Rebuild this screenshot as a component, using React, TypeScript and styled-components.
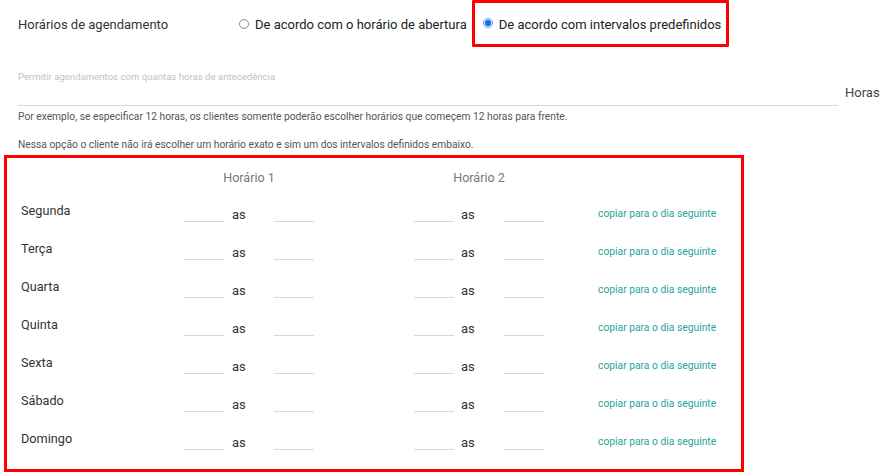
import React from "react";
import styled, { createGlobalStyle } from "styled-components";

const GlobalStyle = createGlobalStyle`
  html, body { margin: 0; padding: 0; background: #fff; }
  body { font-family: Roboto, "Noto Sans", "Liberation Sans", sans-serif; color: #333; }
  * { box-sizing: border-box; }
`;

const Page = styled.div`
  width: 896px;
  height: 476px;
  overflow: hidden;
  display: flex;
  flex-direction: column;
`;

const TopRow = styled.div`
  display: flex;
  align-items: flex-start;
  height: 47px;
  padding-left: 18px;
`;

const RowLabel = styled.div`
  width: 221px;
  font-size: 13px;
  line-height: 16px;
  color: #333;
  padding-top: 17px;
`;

const Option = styled.label<{ $boxed?: boolean }>`
  display: flex;
  align-items: center;
  gap: 6px;
  font-size: 13px;
  line-height: 16px;
  color: #222;
  height: 47px;
  padding-top: 3px;
  ${(p) =>
    p.$boxed
      ? `border: 3px solid #ff0000; border-radius: 1px; padding: 2px 5px 0 8px; margin-left: 5px;`
      : ``}
`;

const Radio = styled.span<{ $checked?: boolean }>`
  width: 10px;
  height: 10px;
  border-radius: 50%;
  flex: none;
  margin-top: -3px;
  border: 1px solid ${(p) => (p.$checked ? "#5b9cf0" : "#8a8a8a")};
  background: ${(p) => (p.$checked ? "radial-gradient(circle, #1a73e8 0 3px, #fff 3.6px)" : "#fff")};
`;

const FieldRow = styled.div`
  display: flex;
  align-items: flex-end;
  padding-left: 18px;
  margin-top: 24px;
  gap: 7px;
`;

const FieldWrap = styled.div`
  width: 820px;
  display: flex;
  flex-direction: column;
`;

const FloatLabel = styled.div`
  font-size: 9.6px;
  line-height: 12px;
  color: #c2c2c2;
`;

const FieldLine = styled.div`
  height: 23px;
  border-bottom: 1px solid #d6d6d6;
`;

const Suffix = styled.div`
  font-size: 13px;
  line-height: 16px;
  color: #444;
  margin-bottom: 5px;
`;

const Hint = styled.div<{ $top: number }>`
  padding-left: 18px;
  font-size: 10.25px;
  line-height: 15px;
  color: #555;
  margin-top: ${(p) => p.$top}px;
`;

const Schedule = styled.div`
  margin: 3px 0 0 4px;
  width: 740px;
  height: 317px;
  border: 3px solid #ff0000;
  padding: 11px 0 19px 14px;
  display: flex;
  flex-direction: column;
`;

const HeaderRow = styled.div`
  display: flex;
  height: 15px;
  padding-top: 1px;
  font-size: 12.5px;
  line-height: 15px;
  color: #777;
`;

const HeaderCell = styled.div<{ $offset: number }>`
  width: 130px;
  margin-left: ${(p) => p.$offset}px;
  text-align: center;
`;

const DayRow = styled.div`
  display: flex;
  align-items: flex-end;
  height: 38px;
`;

const DayName = styled.div`
  width: 163px;
  font-size: 12.7px;
  line-height: 16px;
  color: #333;
  margin-bottom: 3px;
`;

const TimeInput = styled.div`
  width: 40px;
  height: 22px;
  border-bottom: 1px solid #d9d9d9;
`;

const As = styled.div<{ $w: number; $pad: number }>`
  width: ${(p) => p.$w}px;
  padding-left: ${(p) => p.$pad}px;
  font-size: 13px;
  line-height: 15px;
  color: #333;
`;

const Spacer = styled.div<{ $w: number }>`
  width: ${(p) => p.$w}px;
`;

const CopyLink = styled.a`
  font-size: 10.3px;
  line-height: 14px;
  color: #26a69a;
  text-decoration: none;
  margin-bottom: 1px;
  cursor: pointer;
`;

const days = ["Segunda", "Terça", "Quarta", "Quinta", "Sexta", "Sábado", "Domingo"];

export default function App() {
  return (
    <Page>
      <GlobalStyle />
      <TopRow>
        <RowLabel>Horários de agendamento</RowLabel>
        <Option>
          <Radio />
          De acordo com o horário de abertura
        </Option>
        <Option $boxed>
          <Radio $checked />
          De acordo com intervalos predefinidos
        </Option>
      </TopRow>
      <FieldRow>
        <FieldWrap>
          <FloatLabel>Permitir agendamentos com quantas horas de antecedência</FloatLabel>
          <FieldLine />
        </FieldWrap>
        <Suffix>Horas</Suffix>
      </FieldRow>
      <Hint $top={3}>
        Por exemplo, se especificar 12 horas, os clientes somente poderão escolher horários que começem 12 horas para frente.
      </Hint>
      <Hint $top={13}>
        Nessa opção o cliente não irá escolher um horário exato e sim um dos intervalos definidos embaixo.
      </Hint>
      <Schedule>
        <HeaderRow>
          <HeaderCell $offset={163}>Horário 1</HeaderCell>
          <HeaderCell $offset={100}>Horário 2</HeaderCell>
        </HeaderRow>
        {days.map((d) => (
          <DayRow key={d}>
            <DayName>{d}</DayName>
            <TimeInput />
            <As $w={50} $pad={8}>as</As>
            <TimeInput />
            <Spacer $w={100} />
            <TimeInput />
            <As $w={50} $pad={7}>as</As>
            <TimeInput />
            <Spacer $w={54} />
            <CopyLink>copiar para o dia seguinte</CopyLink>
          </DayRow>
        ))}
      </Schedule>
    </Page>
  );
}
